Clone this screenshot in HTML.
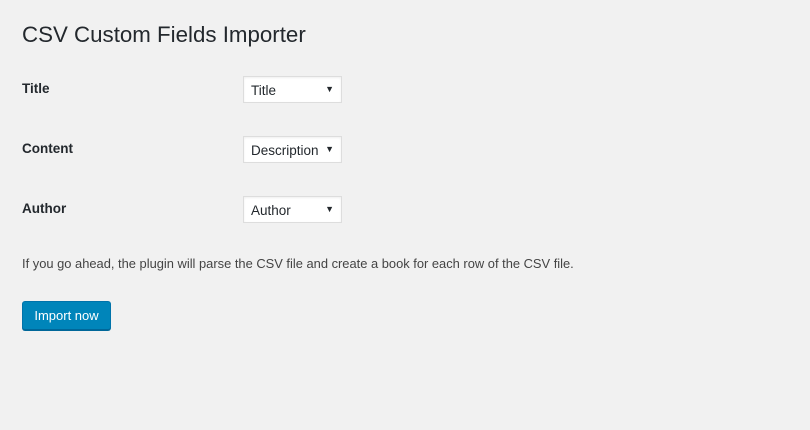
<!DOCTYPE html>
<html><head><style>
body{margin:0;background:#f1f1f1;width:810px;height:430px;font-family:"Liberation Sans",sans-serif;color:#23282d;position:relative;overflow:hidden}
h1{position:absolute;left:22px;top:22px;margin:0;font-size:22.3px;font-weight:400;color:#23282d}
.l{position:absolute;left:22px;font-size:13.5px;font-weight:700}
.s{position:absolute;left:243px;width:97px;height:25px;background:#fff;border:1px solid #ddd;box-shadow:inset 0 1px 2px rgba(0,0,0,.07);font-size:13.5px;line-height:25px;box-sizing:content-box}
.s span{position:absolute;left:7px;top:1px}
.s i{position:absolute;right:7px;top:0;font-style:normal;font-size:9px}
p{position:absolute;left:22px;top:256px;margin:0;font-size:12.9px;color:#444}
.b{position:absolute;left:22px;top:301px;width:87px;height:27px;background:#0085ba;border:1px solid #0073aa;border-bottom-color:#006799;border-radius:3px;box-shadow:0 1px 0 #006799;color:#fff;font-size:13px;line-height:27px;text-align:center}
</style></head><body>
<h1>CSV Custom Fields Importer</h1>
<div class="l" style="top:81px">Title</div>
<div class="s" style="top:76px"><span>Title</span><i>▼</i></div>
<div class="l" style="top:141px">Content</div>
<div class="s" style="top:136px"><span>Description</span><i>▼</i></div>
<div class="l" style="top:201px">Author</div>
<div class="s" style="top:196px"><span>Author</span><i>▼</i></div>
<p>If you go ahead, the plugin will parse the CSV file and create a book for each row of the CSV file.</p>
<div class="b">Import now</div>
</body></html>
